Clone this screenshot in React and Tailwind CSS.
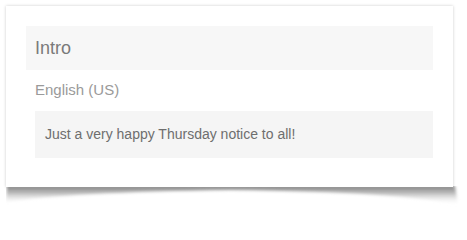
import React from "react";

const CurlShadow = () => (
  <svg width="458" height="26" viewBox="0 0 458 26" className="block -mt-px">
    <defs>
      <linearGradient id="curl" x1="0" y1="0" x2="0" y2="1">
        <stop offset="0" stopColor="#858585" />
        <stop offset="0.35" stopColor="#b8b8b8" />
        <stop offset="1" stopColor="#ffffff" stopOpacity="0" />
      </linearGradient>
      <filter id="soft" x="-5%" y="-50%" width="110%" height="200%">
        <feGaussianBlur stdDeviation="1.4" />
      </filter>
    </defs>
    <path
      d="M1,0 L449,0 L452,19 Q400,6 225,4 Q60,6 0,16 Z"
      fill="url(#curl)"
      filter="url(#soft)"
    />
  </svg>
);

const App = () => {
  return (
    <div
      className="w-[467px] h-[215px] bg-white pt-[6px] pl-[6px] overflow-hidden"
      style={{ fontFamily: '"Liberation Sans", Arial, sans-serif' }}
    >
      {/* card */}
      <div className="w-[447px] h-[181px] bg-white shadow-[0_0_3px_rgba(0,0,0,0.2)] pt-[20px] px-[20px] relative z-10">
        <div className="h-[44px] bg-[#f7f7f7] flex items-center pl-[9px]">
          <p className="text-[18px] text-[#7a7a7a]">Intro</p>
        </div>
        <div className="h-[41px] flex items-center pl-[9px]">
          <p className="text-[15px] text-[#9a9a9a]">English (US)</p>
        </div>
        <div className="ml-[9px] h-[47px] bg-[#f5f5f5] flex items-center pl-[10px]">
          <p className="text-[14px] text-[#6e6e6e]">
            Just a very happy Thursday notice to all!
          </p>
        </div>
      </div>
      {/* curled paper shadow */}
      <CurlShadow />
    </div>
  );
};

export default App;
